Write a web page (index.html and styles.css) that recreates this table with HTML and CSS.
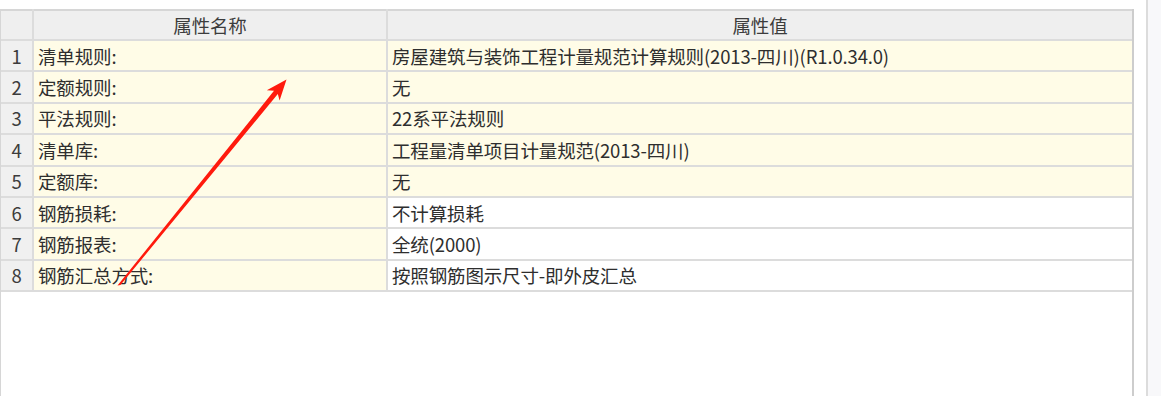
FILE: index.html
```html
<!DOCTYPE html>
<html lang="zh-CN">
<head>
<meta charset="utf-8">
<title>属性</title>
<link rel="stylesheet" href="styles.css">
</head>
<body>
<div class="page">
  <div class="panel">
    <table class="grid">
      <colgroup>
        <col class="c-num">
        <col class="c-name">
        <col class="c-val">
      </colgroup>
      <thead>
        <tr><th class="num"></th><th>属性名称</th><th>属性值</th></tr>
      </thead>
      <tbody>
        <tr class="hl"><td class="num">1</td><td>清单规则:</td><td>房屋建筑与装饰工程计量规范计算规则(2013-四川)(R1.0.34.0)</td></tr>
        <tr class="hl"><td class="num">2</td><td>定额规则:</td><td>无</td></tr>
        <tr class="hl"><td class="num">3</td><td>平法规则:</td><td>22系平法规则</td></tr>
        <tr class="hl"><td class="num">4</td><td>清单库:</td><td>工程量清单项目计量规范(2013-四川)</td></tr>
        <tr class="hl"><td class="num">5</td><td>定额库:</td><td>无</td></tr>
        <tr><td class="num">6</td><td>钢筋损耗:</td><td>不计算损耗</td></tr>
        <tr><td class="num">7</td><td>钢筋报表:</td><td>全统(2000)</td></tr>
        <tr><td class="num">8</td><td>钢筋汇总方式:</td><td>按照钢筋图示尺寸-即外皮汇总</td></tr>
      </tbody>
    </table>
  </div>
  <div class="gap"></div>
  <div class="side"></div>
</div>
<svg class="arrow" width="1161" height="396" viewBox="0 0 1161 396" xmlns="http://www.w3.org/2000/svg">
  <polygon fill="#ff1a0d" points="117.5,285.5 120.5,285 277.8,94 279.6,100.6 286.5,79.5 266.8,90.2 274,90.8"/>
</svg>
</body>
</html>
```

FILE: styles.css
```css
html, body {
  margin: 0;
  padding: 0;
  background: #ffffff;
}

body {
  font-family: "Noto Sans CJK SC", "Noto Sans", "DejaVu Sans", sans-serif;
  font-size: 18.5px;
  color: #2e2e2e;
  position: relative;
  width: 1161px;
  height: 396px;
  overflow: hidden;
}

.page {
  display: flex;
  height: 396px;
}

.panel {
  width: 1134px;
  box-sizing: border-box;
  margin-top: 9px;
  border-left: 1px solid #d6d6d6;
  border-right: 2px solid #cdcdcd;
  background: #ffffff;
}

.gap {
  width: 12px;
}

.side {
  flex: 1;
  border-left: 2px solid #dcdcdc;
  background: #f8f8fa;
}

.grid {
  width: 100%;
  border-collapse: collapse;
  table-layout: fixed;
}

.c-num { width: 32px; }
.c-name { width: 354px; }

.grid th,
.grid td {
  border: 2px solid #dcdcdc;
  padding: 0 0 0 4px;
  white-space: nowrap;
  overflow: hidden;
  line-height: 22px;
  letter-spacing: -0.15px;
}

.grid tr:first-child th { border-top-color: #d6d6d6; }
.grid td:first-child,
.grid th:first-child { border-left: none; }
.grid td:last-child,
.grid th:last-child { border-right: none; }

.grid thead tr { height: 30px; }
.grid tbody tr { height: 31.4px; }

.grid th {
  background: #efefef;
  font-weight: normal;
  text-align: center;
  color: #3c3c3c;
  padding: 0;
}

.grid td {
  background: #ffffff;
}

.grid td.num {
  background: #f0f0f0;
  text-align: center;
  padding: 0;
  color: #3c3c3c;
}

.grid tbody td:nth-child(2) {
  background: #fffce7;
}

.grid tr.hl td:nth-child(3) {
  background: #fffce7;
}

.arrow {
  position: absolute;
  left: 0;
  top: 0;
  pointer-events: none;
}
```
